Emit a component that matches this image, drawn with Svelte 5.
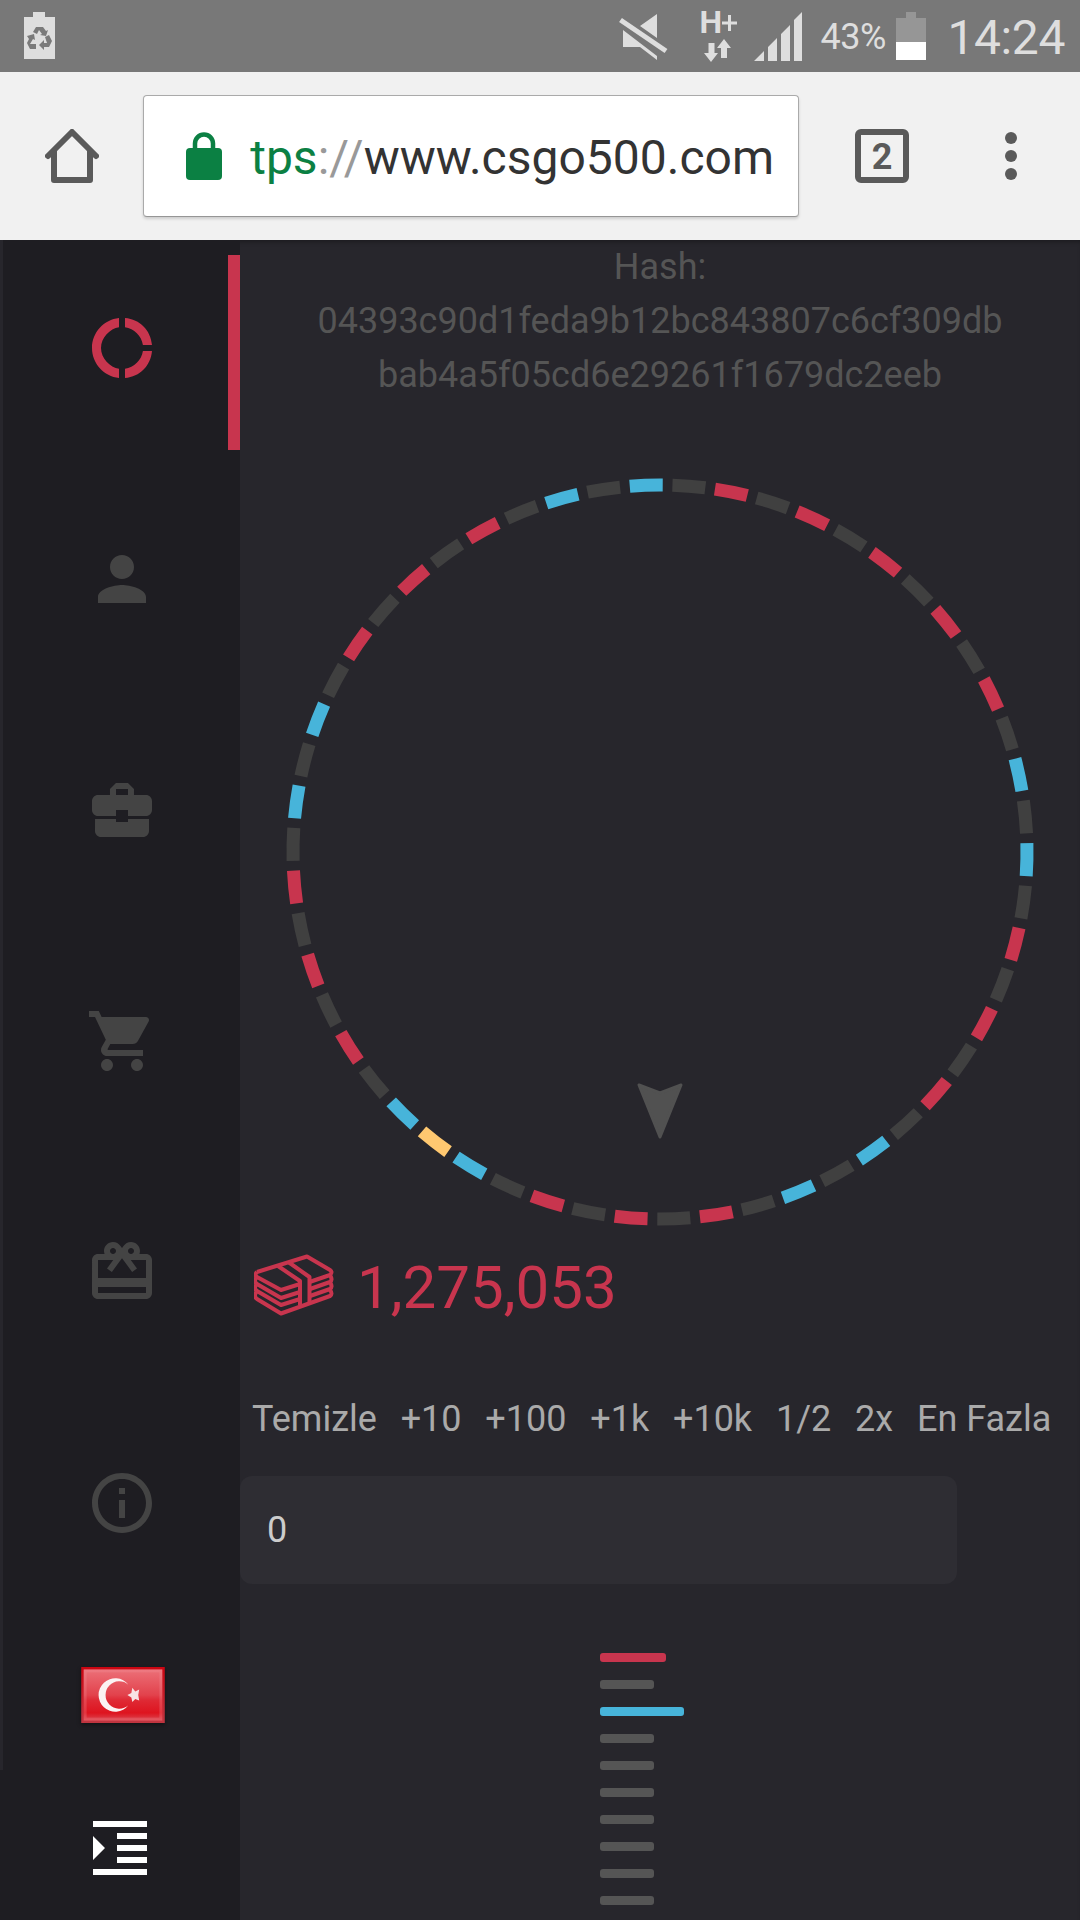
<script lang="ts">
  type Color = 'grey' | 'red' | 'blue' | 'gold';

  // one entry per wheel segment, clockwise from the top
  const wheel =
    'bgrgrgrgrgrgbgbgrgrgrgbgbgrgrgrgbybgrgrgrgbgbgrgrgrgbg';
  const colors: Record<string, Color> = { g: 'grey', r: 'red', b: 'blue', y: 'gold' };

  const center = 376;
  const radius = 367;
  const step = 360 / 54;
  const arc = 5.15;
  const offset = -2.15;

  function point(deg: number) {
    const a = (deg * Math.PI) / 180;
    return `${(center + radius * Math.sin(a)).toFixed(2)} ${(center - radius * Math.cos(a)).toFixed(2)}`;
  }

  const segments = [...wheel].map((key, i) => {
    const mid = offset + i * step;
    return {
      color: colors[key],
      d: `M${point(mid - arc / 2)}A${radius} ${radius} 0 0 1 ${point(mid + arc / 2)}`,
    };
  });

  const nav = [
    {
      name: 'Wheel',
      d: 'M11 5.08V2c-5 .5-9 4.81-9 10s4 9.5 9 10v-3.08c-3-.48-6-3.4-6-6.92s3-6.44 6-6.92zM18.97 11H22c-.47-5-4-8.53-9-9v3.08C16 5.51 18.54 8 18.97 11zM13 18.92V22c5-.47 8.53-4 9-9h-3.03c-.43 3-2.97 5.49-5.97 5.92z',
    },
    {
      name: 'Profile',
      d: 'M12 12c2.21 0 4-1.79 4-4s-1.79-4-4-4-4 1.79-4 4 1.79 4 4 4zm0 2c-2.67 0-8 1.34-8 4v2h16v-2c0-2.66-5.33-4-8-4z',
    },
    {
      name: 'Inventory',
      d: 'M10 16v-1H3.01L3 19c0 1.11.89 2 2 2h14c1.11 0 2-.89 2-2v-4h-7v1h-4zm10-9h-4.01V5l-2-2h-4l-2 2v2H4c-1.1 0-2 .9-2 2v3c0 1.11.89 2 2 2h6v-2h4v2h6c1.1 0 2-.9 2-2V9c0-1.1-.9-2-2-2zm-6 0h-4V5h4v2z',
    },
    {
      name: 'Shop',
      d: 'M7 18c-1.1 0-1.99.9-1.99 2S5.9 22 7 22s2-.9 2-2-.9-2-2-2zM1 2v2h2l3.6 7.59-1.35 2.45c-.16.28-.25.61-.25.96 0 1.1.9 2 2 2h12v-2H7.42c-.14 0-.25-.11-.25-.25l.03-.12.9-1.63h7.45c.75 0 1.41-.41 1.75-1.03l3.58-6.49c.08-.14.12-.31.12-.48 0-.55-.45-1-1-1H5.21l-.94-2H1zm16 16c-1.1 0-1.99.9-1.99 2s.89 2 1.99 2 2-.9 2-2-.9-2-2-2z',
    },
    {
      name: 'Gifts',
      d: 'M20 6h-2.18c.11-.31.18-.65.18-1 0-1.66-1.34-3-3-3-1.05 0-1.96.54-2.5 1.35l-.5.67-.5-.68C10.96 2.54 10.05 2 9 2 7.34 2 6 3.34 6 5c0 .35.07.69.18 1H4c-1.11 0-1.99.89-1.99 2L2 19c0 1.11.89 2 2 2h16c1.11 0 2-.89 2-2V8c0-1.11-.89-2-2-2zm-5-2c.55 0 1 .45 1 1s-.45 1-1 1-1-.45-1-1 .45-1 1-1zM9 4c.55 0 1 .45 1 1s-.45 1-1 1-1-.45-1-1 .45-1 1-1zm11 15H4v-2h16v2zm0-5H4V8h5.08L7 10.83 8.62 12 11 8.76l1-1.36 1 1.36L15.38 12 17 10.83 14.92 8H20v6z',
    },
    {
      name: 'Info',
      d: 'M11 17h2v-6h-2v6zm1-15C6.48 2 2 6.48 2 12s4.48 10 10 10 10-4.48 10-10S17.52 2 12 2zm0 18c-4.41 0-8-3.59-8-8s3.59-8 8-8 8 3.59 8 8-3.59 8-8 8zM11 9h2V7h-2v2z',
    },
  ];

  const amounts = ['Temizle', '+10', '+100', '+1k', '+10k', '1/2', '2x', 'En Fazla'];

  const history: { color: Color; width: number }[] = [
    { color: 'red', width: 66 },
    { color: 'grey', width: 54 },
    { color: 'blue', width: 84 },
    ...Array.from({ length: 7 }, () => ({ color: 'grey' as Color, width: 54 })),
  ];

  let active = $state(0);
  let bet = $state('0');

  function change(label: string) {
    const value = Number(bet) || 0;
    if (label === 'Temizle') bet = '0';
    else if (label === '1/2') bet = String(Math.floor(value / 2));
    else if (label === '2x') bet = String(value * 2);
    else if (label === 'En Fazla') bet = '1275053';
    else bet = String(value + Number(label.slice(1).replace('k', '000')));
  }
</script>

<div class="screen">
  <div class="status">
    <svg class="saver" width="31" height="47" viewBox="0 0 31 47">
      <path fill="#dedede" d="M9 0h12v5h10v42H0V5h9z" />
      <g fill="#7a7a7a">
        <path d="M12 15h7l3 4 2-1-2 6-6-1 2-1-3-4-2 4-4-2z" />
        <path d="M3 24l7-2 1 6-2-1-3 5h6v5H6l-3-6 2-4z" />
        <path d="M21 25l4-2 3 6-3 6h-5v3l-5-5 5-5v3h3z" />
      </g>
    </svg>
    <div class="status-right">
      <svg class="mute" width="49" height="46" viewBox="0 0 49 46">
        <path fill="#dedede" d="M38 0v24L21 12zM4 16l34 26v4L21 33H4z" />
        <path stroke="#787878" stroke-width="9" d="M3 7.500l42 29" />
        <path stroke="#dedede" stroke-width="5" d="M1.500 6l45.500 31" />
      </svg>
      <div class="network">
        <span>H<svg width="15" height="16" viewBox="0 0 15 16"><path fill="#dedede" d="M6 0h3v6.500h6v3H9V16H6V9.500H0v-3h6z" /></svg></span>
        <svg width="27" height="23" viewBox="0 0 27 23">
          <path fill="#dedede" d="M4.500 4h6v10H14L7 23 0 14h4.500zM20 0l7 9h-4v10h-6V9h-4z" />
        </svg>
      </div>
      <svg class="signal" width="49" height="49" viewBox="0 0 49 49">
        <path fill="#dedede" d="M0 49l10-10v10zM14 35l9-9v23h-9zM27 22l9-9v36h-9zM40 8l8-8v49h-8z" />
      </svg>
      <span class="percent">43%</span>
      <svg class="battery" width="30" height="48" viewBox="0 0 30 48">
        <path fill="#969696" d="M10 0h10v6h10v24H0V6h10z" />
        <path fill="#fff" d="M0 30h30v18H0z" />
      </svg>
      <span class="time">14:24</span>
    </div>
  </div>

  <div class="toolbar">
    <svg class="home" width="54" height="54" viewBox="0 0 54 54" fill="none" stroke="#5a5a5a" stroke-width="6">
      <path stroke-linecap="round" stroke-linejoin="round" d="M3 27L27 3l24 24" />
      <path stroke-linejoin="round" d="M9 22v29h36V22" />
    </svg>
    <div class="address">
      <svg width="36" height="48" viewBox="0 0 36 48">
        <rect y="16" width="36" height="32" rx="4" fill="#0b8043" />
        <path fill="none" stroke="#0b8043" stroke-width="4.500" d="M9 18v-6.500a9 9 0 0 1 18 0V18" />
      </svg>
      <div class="url"><span class="scheme">tps</span><span class="slashes">://</span>www.csgo500.com</div>
    </div>
    <div class="tabs">2</div>
    <div class="more"><i></i><i></i><i></i></div>
  </div>

  <div class="page">
    <nav class="sidebar">
      <ul>
        {#each nav as item, i}
          <li class:active={active === i}>
            <button onclick={() => { active = i; }} aria-label={item.name}>
              <svg viewBox="0 0 24 24"><path d={item.d} /></svg>
            </button>
          </li>
        {/each}
      </ul>
      <svg class="flag" width="84" height="56" viewBox="0 0 85 57">
        <defs>
          <linearGradient id="flag-red" x1="0" y1="0" x2="0" y2="1">
            <stop offset="0" stop-color="#ec7078" />
            <stop offset="0.5" stop-color="#e2424c" />
            <stop offset="0.600" stop-color="#df2a35" />
            <stop offset="0.850" stop-color="#de141f" />
            <stop offset="1" stop-color="#dc4650" />
          </linearGradient>
          <linearGradient id="flag-edge" x1="0" y1="0" x2="0" y2="1">
            <stop offset="0" stop-color="#cc0511" />
            <stop offset="1" stop-color="#bf3540" />
          </linearGradient>
        </defs>
        <rect width="85" height="57" fill="url(#flag-edge)" />
        <rect x="2.500" y="2.500" width="80" height="52" fill="url(#flag-red)" />
        <rect x="4" y="4" width="77" height="49" fill="none" stroke="#f3989e" stroke-opacity="0.250" stroke-width="3" />
        <path fill="#fbf3f3" d="M48 18A17 17 0 1 0 48 39A14 14 0 1 1 48 18z" />
        <path fill="#f8e4e5" d="M52 21l3 4 4-2-1 5.500 1 5.500-4-1.500-3 3-1-4.500-4-2.500 4-2z" />
      </svg>
      <svg class="indent" viewBox="0 0 24 24">
        <path d="M3 21h18v-2H3v2zM3 8v8l4-4-4-4zm8 9h10v-2H11v2zM3 3v2h18V3H3zm8 6h10V7H11v2zm0 4h10v-2H11v2z" />
      </svg>
    </nav>

    <main>
      <p class="hash">
        Hash:<br />04393c90d1feda9b12bc843807c6cf309db<br />bab4a5f05cd6e29261f1679dc2eeb
      </p>

      <svg class="wheel" width="752" height="752" viewBox="0 0 752 752">
        {#each segments as segment}
          <path class="segment {segment.color}" d={segment.d} />
        {/each}
        <path class="pointer" d="M355 609l21 8 21-8-21 52z" />
      </svg>

      <div class="balance">
        <svg width="80" height="62" viewBox="0 0 80 62">
          <path d="M3 18L53 2.500 76 16Q79 18 76 21L55.500 28M3 18Q0 21 3 23L27 36 46 30" />
          <path d="M24 12L46 27v24M35 8.500L55.500 23v25" />
          <path d="M3 23Q-1 27 3 30L27 44l19-6M3 30Q-1 34 3 37L27 51l19-6M3 37Q-1 42 3 45L27 59.500 76 42Q79 40 76 36" />
          <path d="M76 21Q79 26 76 28L56 35M76 28Q79 33 76 35L56 42" />
        </svg>
        <span>1,275,053</span>
      </div>

      <div class="amounts">
        {#each amounts as label}
          <button onclick={() => change(label)}>{label}</button>
        {/each}
      </div>

      <input class="bet" bind:value={bet} aria-label="Bet" />

      <div class="history">
        {#each history as round}
          <div class="round {round.color}" style="width: {round.width}px"></div>
        {/each}
      </div>
    </main>
  </div>
</div>

<style>
  :global(body) {
    margin: 0;
    background: #27262c;
  }

  .screen {
    width: 1080px;
    height: 1920px;
    overflow: hidden;
    display: flex;
    flex-direction: column;
    font-family: Roboto, sans-serif;
    font-size: 36px;
  }

  svg {
    display: block;
    flex-shrink: 0;
  }

  button {
    padding: 0;
    border: 0;
    background: none;
    font: inherit;
    color: inherit;
  }

  .status {
    height: 72px;
    box-sizing: border-box;
    padding: 0 15px 0 24px;
    background: #787878;
    color: #dedede;
    display: flex;
    justify-content: space-between;
    align-items: flex-start;
  }

  .saver {
    margin-top: 12px;
  }

  .status-right {
    display: flex;
    align-items: flex-start;
  }

  .mute {
    margin: 14px 31px 0 0;
  }

  .network {
    width: 36px;
    margin: 11px 19px 0 0;
  }

  .network span {
    display: flex;
    align-items: center;
    height: 23px;
    margin-bottom: 5px;
    font-size: 32px;
    font-weight: 700;
    line-height: 23px;
  }

  .network > svg {
    margin-left: 5px;
  }

  .signal {
    margin: 12px 17px 0 0;
  }

  .percent {
    width: 68px;
    margin-right: 8px;
    line-height: 75px;
    letter-spacing: -0.5px;
  }

  .battery {
    margin: 12px 21px 0 0;
  }

  .time {
    font-size: 48px;
    line-height: 75px;
    letter-spacing: -0.4px;
  }

  .toolbar {
    height: 168px;
    box-sizing: border-box;
    padding-left: 45px;
    background: #f1f1f1;
    display: flex;
    align-items: center;
  }

  .address {
    width: 656px;
    height: 122px;
    box-sizing: border-box;
    margin-left: 44px;
    padding-left: 42px;
    background: #fff;
    border: 1px solid #aaa;
    border-bottom-color: #969696;
    border-radius: 4px;
    box-shadow: 0 2px 3px rgba(0, 0, 0, 0.15);
    display: flex;
    align-items: center;
  }

  .url {
    width: 522px;
    margin-left: 30px;
    padding-top: 3px;
    display: flex;
    justify-content: flex-end;
    color: #333;
    font-size: 48px;
    line-height: 60px;
    white-space: nowrap;
  }

  .scheme {
    color: #0b8043;
  }

  .slashes {
    color: #999;
  }

  .tabs {
    width: 54px;
    height: 54px;
    box-sizing: border-box;
    margin-left: 56px;
    border: 6px solid #5a5a5a;
    border-radius: 6px;
    color: #5a5a5a;
    font-weight: 700;
    line-height: 44px;
    text-align: center;
  }

  .more {
    margin-left: 96px;
    display: flex;
    flex-direction: column;
    gap: 6px;
  }

  .more i {
    width: 12px;
    height: 12px;
    border-radius: 50%;
    background: #5a5a5a;
  }

  .page {
    flex: 1;
    min-height: 0;
    display: flex;
    background: #27262c;
    box-shadow: inset 0 4px 4px -2px rgba(0, 0, 0, 0.3);
  }

  .sidebar {
    width: 240px;
    background: linear-gradient(#27262c, #27262c) 0 0 / 3px 1530px no-repeat #1e1d22;
    display: flex;
    flex-direction: column;
    align-items: center;
  }

  .sidebar ul {
    width: 240px;
    margin: 0;
    padding: 15px 0 0;
    list-style: none;
  }

  .sidebar li {
    height: 195px;
    margin-bottom: 36px;
    box-sizing: border-box;
    padding: 57px 0 0 85.5px;
  }

  .sidebar li.active {
    border-right: 12px solid #c8354e;
  }

  .sidebar li:last-child {
    margin-bottom: 0;
  }

  .sidebar li svg {
    width: 72px;
    height: 72px;
    fill: #444;
  }

  .sidebar li.active svg {
    fill: #c8354e;
  }

  .flag {
    margin: 62px 0 0 6px;
    box-shadow: 0 2px 4px rgba(0, 0, 0, 0.4);
  }

  .indent {
    width: 72px;
    height: 72px;
    margin-top: 89px;
    fill: #fff;
  }

  main {
    flex: 1;
    display: flex;
    flex-direction: column;
    align-items: flex-start;
  }

  .hash {
    width: 100%;
    margin: 0;
    color: #555;
    line-height: 54px;
    text-align: center;
  }

  .wheel {
    margin: 74px 0 0 44px;
  }

  .segment {
    fill: none;
    stroke-width: 13px;
  }

  .segment.grey {
    stroke: #404040;
  }

  .segment.red {
    stroke: #c8354e;
  }

  .segment.blue {
    stroke: #47b4da;
  }

  .segment.gold {
    stroke: #ffc870;
  }

  .pointer {
    fill: #515151;
    stroke: #515151;
    stroke-width: 3px;
    stroke-linejoin: round;
  }

  .balance {
    margin: 26px 0 0 14px;
    display: flex;
    align-items: center;
    gap: 23px;
    color: #c8354e;
    font-size: 60px;
    line-height: 62px;
  }

  .balance span {
    height: 56px;
  }

  .balance svg {
    fill: none;
    stroke: #c8354e;
    stroke-width: 4px;
    stroke-linejoin: round;
  }

  .amounts {
    margin: 76px 0 0 12px;
    display: flex;
    gap: 23.800px;
    color: #aaa;
    line-height: 54px;
    white-space: nowrap;
  }

  .bet {
    width: 717px;
    height: 108px;
    box-sizing: border-box;
    margin-top: 30px;
    padding: 0 27px;
    border: 0;
    border-radius: 12px;
    background: #2e2d33;
    color: #ccc;
    font: inherit;
  }

  .history {
    margin: 69px 0 0 360px;
    display: flex;
    flex-direction: column;
    gap: 18px;
  }

  .round {
    height: 9px;
    border-radius: 3px;
  }

  .round.grey {
    background: #555;
  }

  .round.red {
    background: #c8354e;
  }

  .round.blue {
    background: #47b4da;
  }
</style>
